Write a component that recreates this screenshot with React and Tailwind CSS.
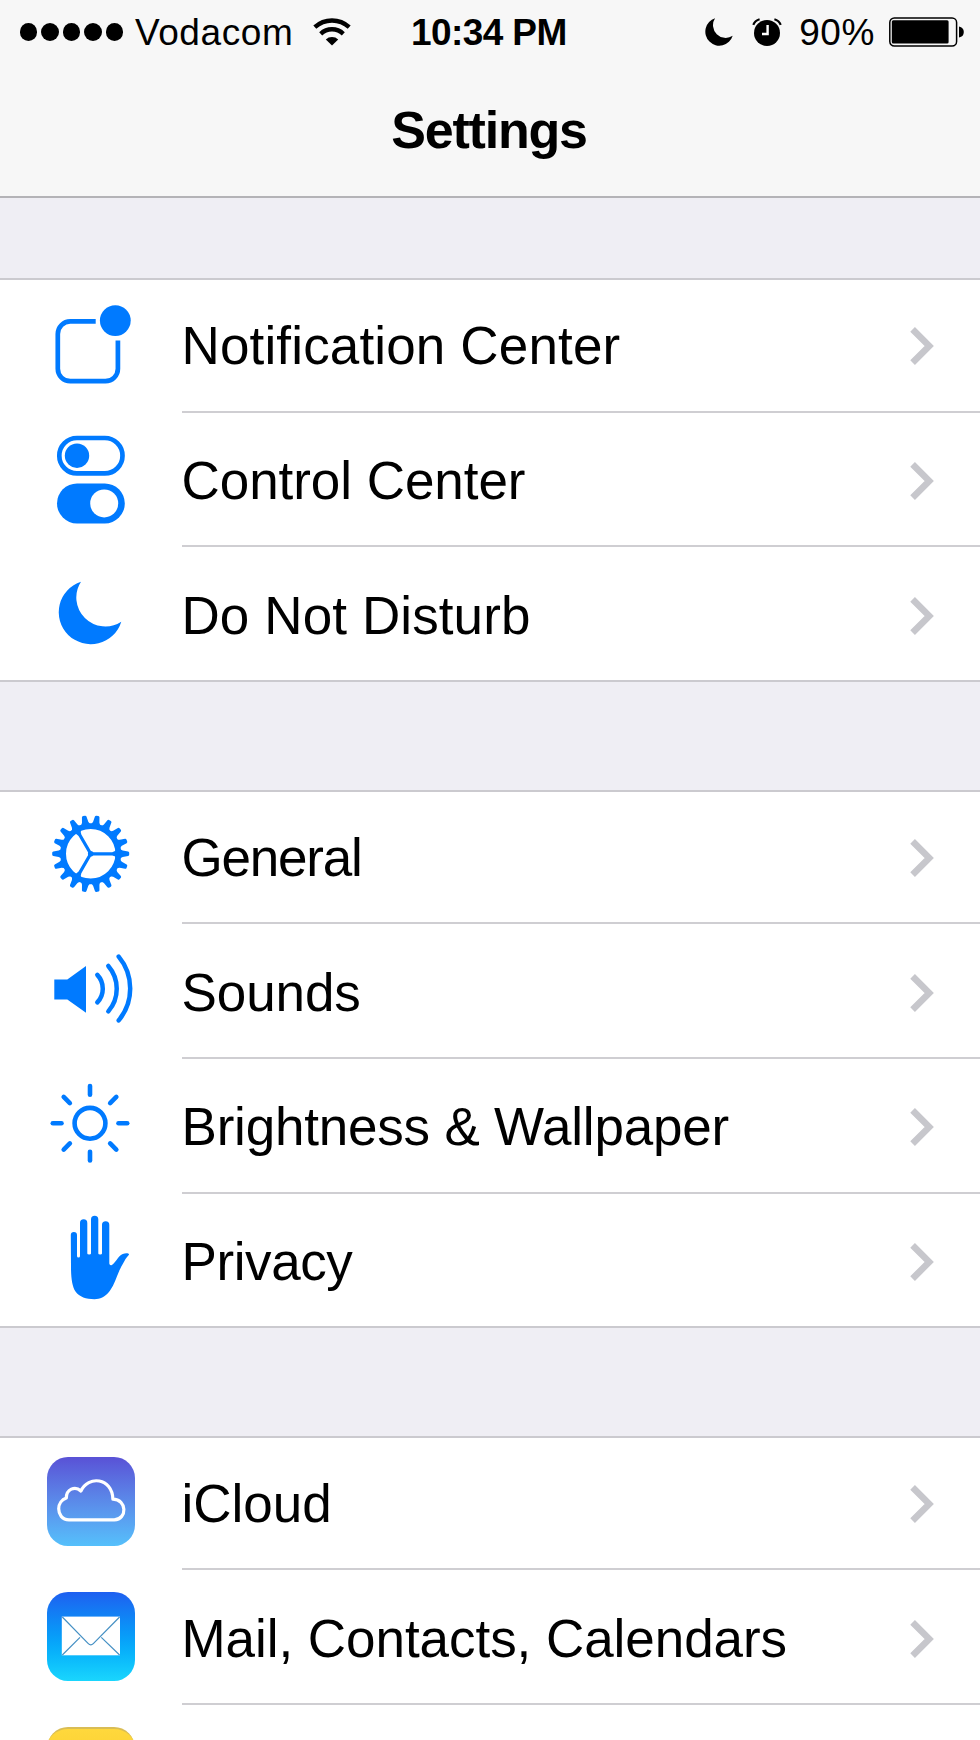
import clsx from "clsx";

const BLUE = "#007aff";

function NotificationIcon() {
  return (
    <svg viewBox="0 0 90 90" className="h-[90px] w-[90px] overflow-visible">
      <path
        d="M50.7 22.4H25.3A12.5 12.5 0 0 0 12.8 34.9V69.7A12.5 12.5 0 0 0 25.3 82.2H60.4A12.5 12.5 0 0 0 72.9 69.7V41.4"
        fill="none"
        stroke={BLUE}
        strokeWidth="4.7"
      />
      <circle cx="70.3" cy="21.6" r="15.4" fill={BLUE} />
    </svg>
  );
}

function ControlIcon() {
  return (
    <svg viewBox="0 0 90 90" className="h-[90px] w-[90px] overflow-visible">
      <rect x="14.3" y="4" width="63.2" height="35.4" rx="17.7" fill="none" stroke={BLUE} strokeWidth="4.7" />
      <circle cx="32" cy="21.7" r="12.2" fill={BLUE} />
      <rect x="12" y="49.4" width="67.8" height="40" rx="20" fill={BLUE} />
      <circle cx="59.2" cy="69.4" r="14" fill="#fff" />
    </svg>
  );
}

function MoonIcon() {
  return (
    <svg viewBox="0 0 90 90" className="h-[90px] w-[90px]">
      <path d="M36 12.7A29 29 0 0 0 76.3 52.7A32 32 0 1 1 36 12.7Z" fill={BLUE} />
    </svg>
  );
}

function GearIcon() {
  const teeth = Array.from({ length: 18 }, (_, i) => i * 20);

  return (
    <svg viewBox="0 0 90 90" className="h-[90px] w-[90px]">
      <g transform="translate(45.7 42.8)" fill={BLUE}>
        <circle r="27.6" fill="none" stroke={BLUE} strokeWidth="5.8" />
        {teeth.map((a) => (
          <path key={a} d="M29 -5Q30.6 -3.7 32 -3.2L37.4 -2.3Q38.5 -2 38.5 -1V1Q38.5 2 37.4 2.3L32 3.2Q30.6 3.7 29 5Z" transform={`rotate(${a})`} />
        ))}
        {[0, 120, 240].map((a) => (
          <path key={a} d="M0 -1.6H21.5Q24.3 -1.8 26 -4.5V4.5Q24.3 1.8 21.5 1.6H0Z" transform={`rotate(${a})`} />
        ))}
        <circle r="2.8" />
      </g>
    </svg>
  );
}

function SoundIcon() {
  return (
    <svg viewBox="0 0 90 90" className="h-[90px] w-[90px]">
      <path d="M9.3 33.4H22.3L41 20.1V66.7L22.3 53.4H9.3Z" fill={BLUE} />
      <g fill="none" stroke={BLUE} strokeWidth="4.5" strokeLinecap="round">
        <path d="M52.3 28.9A20 20 0 0 1 52.3 56.4" />
        <path d="M63.3 20A34.8 34.8 0 0 1 63.3 65.4" />
        <path d="M73.7 10.6A50 50 0 0 1 73.7 74.4" />
      </g>
    </svg>
  );
}

function SunIcon() {
  return (
    <svg viewBox="0 0 90 90" className="h-[90px] w-[90px]">
      <g transform="translate(45 43.3)" fill="none" stroke={BLUE} strokeWidth="4.6" strokeLinecap="round">
        <circle r="15.4" />
        {[0, 45, 90, 135, 180, 225, 270, 315].map((a) => (
          <path key={a} d="M28.5 0H37.2" transform={`rotate(${a})`} />
        ))}
      </g>
    </svg>
  );
}

function HandIcon() {
  return (
    <svg viewBox="0 0 90 90" className="h-[90px] w-[90px]">
      <path
        d="M25.8 20A3.1 3.1 0 0 1 32 20V41Q32 42.6 33.5 42.6Q35 42.6 35 41V8A3.65 3.65 0 0 1 42.3 8V38.5Q42.3 39.6 44.2 39.6Q46 39.6 46 38.5V4.5A3.65 3.65 0 0 1 53.3 4.5V38.5Q53.3 39.6 55.2 39.6Q57 39.6 57 38.5V9.8A3.65 3.65 0 0 1 64.3 9.8V48.5Q64.6 50.6 66.4 50.2C68.6 49.6 71.5 44.5 74.5 41.2C77 38.3 83 37.2 84 39.2C84.3 40 81.5 42.5 80 45C76 52 75 54 72.3 60.5C69 69 67 73.5 63.5 77.5C60 81.8 55 84.2 49.5 84.2C41 84.2 34.5 82 30.5 76.5C27 71.5 26 62 26 52Z"
        fill={BLUE}
      />
    </svg>
  );
}

function CloudIcon() {
  return (
    <div className="ml-[1.5px] flex h-[89px] w-[88.5px] items-center justify-center rounded-[21px] bg-linear-to-b from-[#5951d6] to-[#55c0fb]">
      <svg viewBox="2 0 88 89" className="h-[89px] w-[88px]">
        <path
          d="M24 62.8C17 62.8 13.7 57.3 13.7 51.8C13.7 46.8 16.8 42.6 21.3 41C21.3 32.5 29.8 28.3 35.9 34C43 18.2 67.2 20.5 67.9 42.2C82 42.2 82.6 62.3 69.3 62.8Z"
          fill="none"
          stroke="#fff"
          strokeWidth="3.2"
          strokeLinejoin="round"
        />
      </svg>
    </div>
  );
}

function MailIcon() {
  return (
    <div className="ml-[1.5px] flex h-[89px] w-[88.5px] items-center justify-center rounded-[21px] bg-linear-to-b from-[#1e5ff0] to-[#1ad6fd]">
      <svg viewBox="2 0 88 89" className="h-[89px] w-[88px]">
        <rect x="16.8" y="24.6" width="58.2" height="38.7" fill="#fff" />
        <g fill="none" stroke="#4590c4" strokeWidth="1.2">
          <path d="M17.3 25L43.3 51.6Q45.8 54.2 48.3 51.6L74.6 25" />
          <path d="M35 45.4L17.3 63M56.3 45.4L74.6 63" />
        </g>
      </svg>
    </div>
  );
}

function NotesIcon() {
  return (
    <div className="ml-[1.5px] h-[89px] w-[88.5px] rounded-[21px] border-t-2 border-[#d9bd55] bg-linear-to-b from-[#ffd83c] to-[#f6c41c]" />
  );
}

const groups = [
  {
    gap: "mt-[80px]",
    rows: [
      { label: "Notification Center", icon: NotificationIcon, tracking: "tracking-[0.15px]" },
      { label: "Control Center", icon: ControlIcon, tracking: "tracking-[-0.05px]" },
      { label: "Do Not Disturb", icon: MoonIcon, tracking: "tracking-[0.1px]" },
    ],
  },
  {
    gap: "mt-[107.7px]",
    rows: [
      { label: "General", icon: GearIcon, tracking: "tracking-[-1.2px]" },
      { label: "Sounds", icon: SoundIcon, tracking: "tracking-[-0.1px]" },
      { label: "Brightness & Wallpaper", icon: SunIcon, tracking: "tracking-[-0.2px]" },
      { label: "Privacy", icon: HandIcon, tracking: "tracking-[-0.4px]" },
    ],
  },
  {
    gap: "mt-[107.3px]",
    rows: [
      { label: "iCloud", icon: CloudIcon, tracking: "tracking-[0px]" },
      { label: "Mail, Contacts, Calendars", icon: MailIcon, tracking: "tracking-[-0.05px]" },
      { label: "", icon: NotesIcon, tracking: "" },
    ],
  },
];

function Chevron() {
  return (
    <svg viewBox="0 0 24 38" className="mt-[4px] mr-[46px] h-[38px] w-[24px] shrink-0">
      <path d="M2.6 2.4L19.2 19L2.6 35.6" fill="none" stroke="#c7c7cc" strokeWidth="6.6" />
    </svg>
  );
}

function Row({ label, icon: Icon, tracking, last }) {
  return (
    <li className={clsx("flex h-[134.67px]", last && "border-b-2 border-[#cbcacf]")}>
      <div className="flex h-[132.67px] w-[181.5px] shrink-0 items-center pl-[45px]">
        <Icon />
      </div>
      <div className={clsx("flex h-full flex-1 items-center justify-between", !last && "border-b-2 border-[#cfced2]")}>
        <span className={clsx("pt-[3px] text-[53px] leading-none whitespace-nowrap", tracking)}>
          {label}
        </span>
        <Chevron />
      </div>
    </li>
  );
}

function StatusBar() {
  return (
    <div className="flex h-[64px] items-center text-[37px] leading-none">
      <div className="flex w-[411px] items-center pl-[20px]">
        <div className="flex gap-1">
          {[0, 1, 2, 3, 4].map((i) => (
            <span key={i} className="h-[17.4px] w-[17.4px] rounded-full bg-black" />
          ))}
        </div>
        <span className="ml-[12px] w-[164px] pt-px tracking-[0.6px]">Vodacom</span>
        <svg viewBox="0 0 38 28" className="ml-[14px] h-[28px] w-[38px]">
          <g fill="none" stroke="#000" strokeWidth="4.4">
            <path d="M1.8 9.2A25.5 25.5 0 0 1 36.2 9.2" />
            <path d="M7.7 15.8A16.5 16.5 0 0 1 30.3 15.8" />
          </g>
          <path d="M19 27.6L12.8 21.4A9 9 0 0 1 25.2 21.4Z" />
        </svg>
      </div>
      <span className="pt-px font-bold tracking-[-0.6px]">10:34 PM</span>
      <div className="ml-auto flex items-center pr-[16px]">
        <svg viewBox="13 12 64 64" className="h-[28px] w-[28px]">
          <path d="M36 12.7A29 29 0 0 0 76.3 52.7A32 32 0 1 1 36 12.7Z" />
        </svg>
        <svg viewBox="0 0 30 28" className="ml-[19px] h-[28px] w-[30px]">
          <circle cx="15" cy="15" r="13" />
          <path d="M1.3 6.8Q3 2.4 7.6 1.2M28.7 6.8Q27 2.4 22.4 1.2" fill="none" stroke="#000" strokeWidth="2.2" />
          <path d="M15.6 7V16H10" fill="none" stroke="#fff" strokeWidth="2.4" />
        </svg>
        <span className="-mr-px ml-[17px] pt-px tracking-[0.6px]">90%</span>
        <svg viewBox="0 0 75 30" className="ml-[15px] h-[30px] w-[75px]">
          <rect x="0.8" y="0.9" width="66.8" height="28.2" rx="4.5" fill="none" stroke="#000" strokeWidth="1.5" />
          <rect x="2.8" y="3.2" width="56.8" height="23.4" rx="1.5" />
          <path d="M70 9.5Q74.8 10.5 74.8 15Q74.8 19.5 70 20.5Z" />
        </svg>
      </div>
    </div>
  );
}

export default function App() {
  return (
    <div className="h-[1740px] w-[980px] overflow-hidden bg-[#efeef4] font-['Liberation_Sans',Arial,sans-serif] text-black">
      <header className="h-[198px] border-b-2 border-[#b4b3b7] bg-[#f7f7f7]">
        <StatusBar />
        <h1 className="pt-[40px] pr-[2px] text-center text-[52px] leading-none font-bold tracking-[-1.2px]">
          Settings
        </h1>
      </header>

      {groups.map((group, i) => (
        <ul key={i} className={clsx("border-t-2 border-[#cbcacf] bg-white", group.gap)}>
          {group.rows.map((row, j) => (
            <div key={j} className={clsx(j === 0 && "-mt-[2px]")}>
              <Row {...row} last={j === group.rows.length - 1} />
            </div>
          ))}
        </ul>
      ))}
    </div>
  );
}
